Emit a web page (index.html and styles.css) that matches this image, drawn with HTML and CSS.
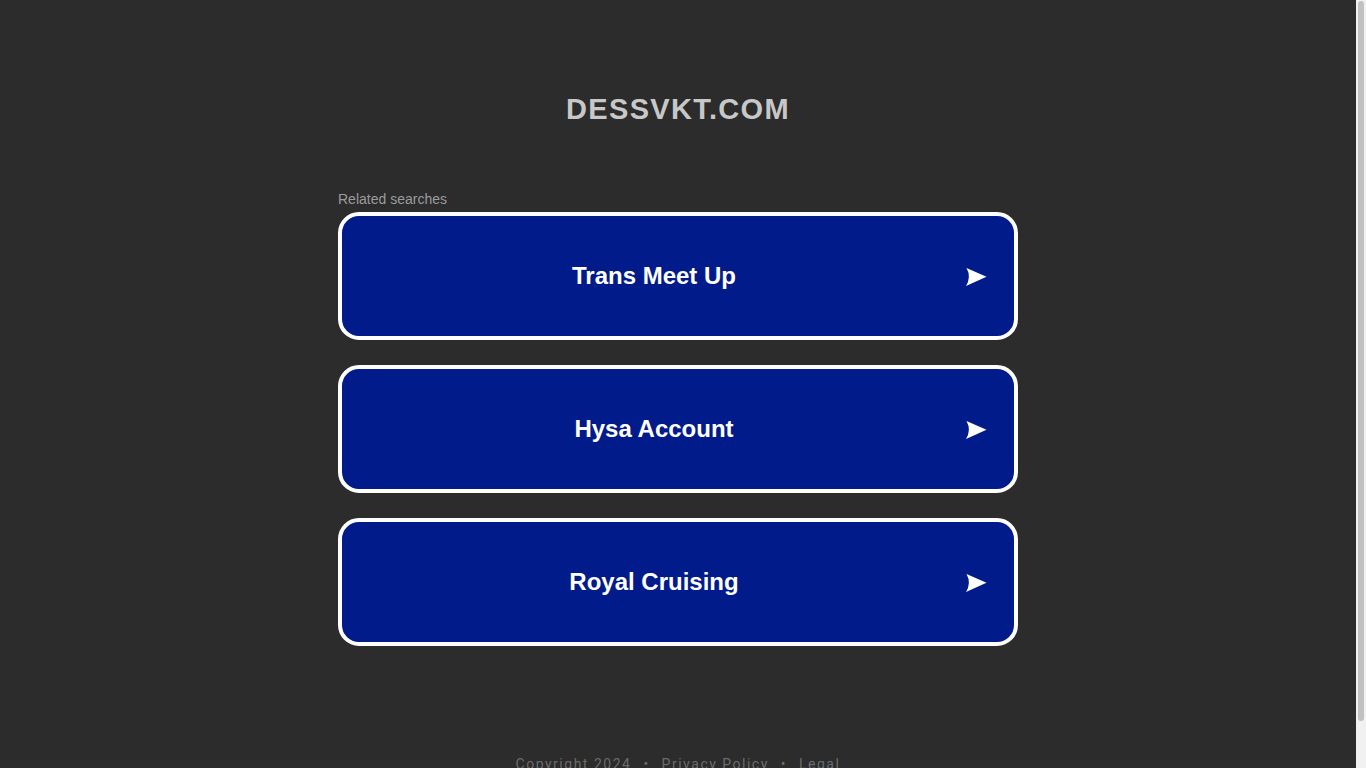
FILE: index.html
```html
<!DOCTYPE html>
<html lang="en">
<head>
<meta charset="utf-8">
<title>dessvkt.com</title>
<link rel="stylesheet" href="styles.css">
</head>
<body>
<div class="page">
  <header class="header">
    <h1 class="domain">DESSVKT.COM</h1>
  </header>
  <main class="content">
    <div class="related-title">Related searches</div>
    <div class="cards">
      <a class="card" href="#">
        <span class="card-label">Trans Meet Up</span>
        <span class="card-arrow"><svg width="21" height="18" viewBox="0 0 21 18"><path d="M0.5 0 L20.5 8.8 L0 18 Q5.5 9 0.5 0 Z" fill="#fff"/></svg></span>
      </a>
      <a class="card" href="#">
        <span class="card-label">Hysa Account</span>
        <span class="card-arrow"><svg width="21" height="18" viewBox="0 0 21 18"><path d="M0.5 0 L20.5 8.8 L0 18 Q5.5 9 0.5 0 Z" fill="#fff"/></svg></span>
      </a>
      <a class="card" href="#">
        <span class="card-label">Royal Cruising</span>
        <span class="card-arrow"><svg width="21" height="18" viewBox="0 0 21 18"><path d="M0.5 0 L20.5 8.8 L0 18 Q5.5 9 0.5 0 Z" fill="#fff"/></svg></span>
      </a>
    </div>
  </main>
  <footer class="footer">
    <span>Copyright 2024</span><span class="sep">•</span><a href="#">Privacy Policy</a><span class="sep">•</span><a href="#">Legal</a>
  </footer>
</div>
<div class="fake-scrollbar"><div class="fake-thumb"></div></div>
</body>
</html>
```
FILE: styles.css
```css
html, body {
  margin: 0;
  padding: 0;
  background: #2c2c2c;
}
body {
  font-family: "Liberation Sans", Arial, sans-serif;
  padding-right: 10px;
}
.page {
  display: flex;
  flex-direction: column;
  align-items: center;
}
.header {
  padding-top: 92px;
  text-align: center;
}
.domain {
  margin: 0;
  font-size: 29px;
  line-height: 35px;
  font-weight: bold;
  letter-spacing: 1.3px;
  color: #c8c8c8;
}
.content {
  width: 680px;
  margin-top: 64px;
}
.related-title {
  font-size: 14px;
  line-height: 17px;
  color: #9b9b9b;
  margin-bottom: 4px;
}
.cards {
  display: flex;
  flex-direction: column;
  gap: 25px;
}
.card {
  display: flex;
  align-items: center;
  height: 120px;
  border: 4px solid #ffffff;
  border-radius: 21px;
  background: #011b8b;
  text-decoration: none;
  color: #ffffff;
}
.card-label {
  flex: 1;
  text-align: center;
  font-size: 24px;
  font-weight: bold;
  line-height: 28px;
}
.card-arrow {
  width: 48px;
  display: flex;
  align-items: center;
  padding-top: 1px;
}
.card-arrow svg {
  display: block;
}
.footer {
  margin-top: 110px;
  padding-bottom: 46px;
  font-family: Roboto, "Liberation Sans", sans-serif;
  font-size: 14px;
  line-height: 17px;
  letter-spacing: 1.5px;
  color: #6b6b6b;
  display: flex;
}
.footer a {
  color: #6b6b6b;
  text-decoration: none;
}
.footer .sep {
  padding: 0 12px;
}
.fake-scrollbar {
  position: fixed;
  top: 0;
  right: 0;
  width: 10px;
  height: 100vh;
  background: #f1f1f1;
}
.fake-thumb {
  margin: 1px 2px 0 2px;
  height: 720px;
  border-radius: 3px;
  background: #c1c1c1;
}
```
